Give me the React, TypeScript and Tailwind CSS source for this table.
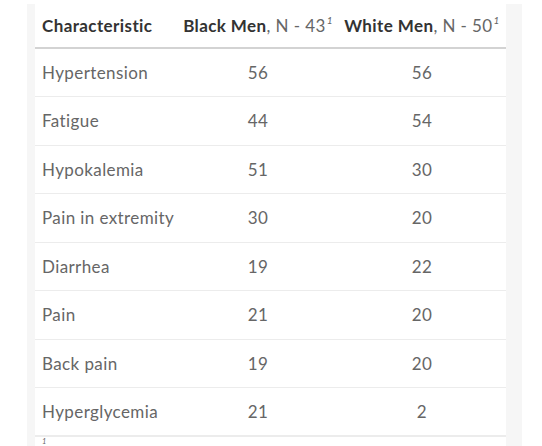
import React from "react";

const rows: [string, string, string][] = [
  ["Hypertension", "56", "56"],
  ["Fatigue", "44", "54"],
  ["Hypokalemia", "51", "30"],
  ["Pain in extremity", "30", "20"],
  ["Diarrhea", "19", "22"],
  ["Pain", "21", "20"],
  ["Back pain", "19", "20"],
  ["Hyperglycemia", "21", "2"],
];

export default function App() {
  return (
    <div className="h-[446px] w-[542px] overflow-hidden bg-white pl-[27px] pt-[4px]" style={{ fontFamily: "Lato, 'Open Sans', sans-serif" }}>
      <div className="w-[495px] bg-[#f6f6f6] pl-[8px] pr-[16px] h-[460px]">
        <table className="w-[471px] table-fixed border-collapse bg-white tracking-[0.4px]">
          <colgroup>
            <col className="w-[143px]" />
            <col className="w-[160px]" />
            <col className="w-[168px]" />
          </colgroup>
          <thead>
            <tr className="h-[44px] border-b-2 border-[#d3d3d3]">
              <th className="pl-[7px] text-left text-[17px] font-bold text-[#333] whitespace-nowrap">Characteristic</th>
              <th className="text-center text-[17px] whitespace-nowrap">
                <span className="font-bold text-[#333]">Black Men</span>
                <span className="font-normal text-[#666]">, N - 43</span>
                <sup className="-top-[8px] ml-[1px] text-[10px] italic font-normal text-[#666]">1</sup>
              </th>
              <th className="text-center text-[17px] whitespace-nowrap">
                <span className="font-bold text-[#333]">White Men</span>
                <span className="font-normal text-[#666]">, N - 50</span>
                <sup className="-top-[8px] ml-[1px] text-[10px] italic font-normal text-[#666]">1</sup>
              </th>
            </tr>
          </thead>
          <tbody>
            {rows.map(([a, b, c], i) => (
              <tr key={a} className={`h-[48.5px] ${i > 0 ? "border-t border-[#ececec]" : ""} ${i === rows.length - 1 ? "border-b-2 border-[#d3d3d3]" : ""}`}>
                <td className="pl-[7px] text-left text-[17px] text-[#666] whitespace-nowrap">{a}</td>
                <td className="text-center text-[17px] text-[#666]">{b}</td>
                <td className="text-center text-[17px] text-[#666]">{c}</td>
              </tr>
            ))}
          </tbody>
          <tfoot>
            <tr>
              <td colSpan={3} className="pl-[7px] pt-[1px] text-left text-[10px] italic leading-[12px] text-[#666]">
                <sup>1</sup>
              </td>
            </tr>
          </tfoot>
        </table>
      </div>
    </div>
  );
}
